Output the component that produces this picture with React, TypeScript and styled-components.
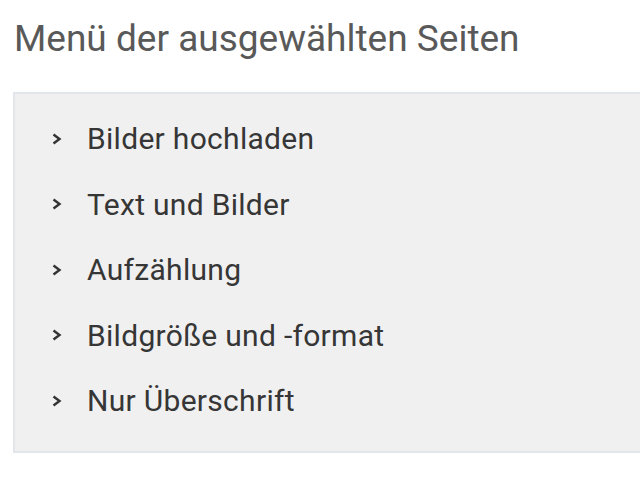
import styled, { createGlobalStyle } from 'styled-components';

const GlobalStyle = createGlobalStyle`
  html, body {
    margin: 0;
    padding: 0;
    background: #ffffff;
    overflow: hidden;
  }
  body {
    font-family: Roboto, 'Liberation Sans', sans-serif;
  }
`;

const Page = styled.div`
  width: 640px;
  height: 480px;
  padding: 12px 0 0 13px;
  box-sizing: border-box;
  overflow: hidden;
`;

const Title = styled.h2`
  margin: 0 0 26px 1px;
  font-size: 37px;
  font-weight: 400;
  line-height: 54px;
  color: #595959;
`;

const Panel = styled.div`
  width: 660px;
  height: 361px;
  box-sizing: border-box;
  background: #f0f0f0;
  border: 2px solid #e2e5e9;
  padding: 12px 0 0 0;
`;

const Menu = styled.ul`
  list-style: none;
  margin: 0;
  padding: 0;
`;

const Item = styled.li`
  display: flex;
  align-items: center;
  height: 65.5px;
  padding-left: 37px;
  font-size: 30px;
  letter-spacing: 0.3px;
  color: #363636;
`;

const Chevron = styled.span`
  display: inline-flex;
  width: 35px;
  color: #333;
  svg {
    display: block;
  }
`;

const items = ['Bilder hochladen', 'Text und Bilder', 'Aufzählung', 'Bildgröße und -format', 'Nur Überschrift'];

export default function App() {
  return (
    <>
      <GlobalStyle />
      <Page>
        <Title>Menü der ausgewählten Seiten</Title>
        <Panel>
          <Menu>
            {items.map((label) => (
              <Item key={label}>
                <Chevron>
                  <svg width="10" height="16" viewBox="0 0 10 16">
                    <path d="M1.5 3.5 L7.5 8 L1.5 12.5" fill="none" stroke="currentColor" strokeWidth="2.4" />
                  </svg>
                </Chevron>
                {label}
              </Item>
            ))}
          </Menu>
        </Panel>
      </Page>
    </>
  );
}
